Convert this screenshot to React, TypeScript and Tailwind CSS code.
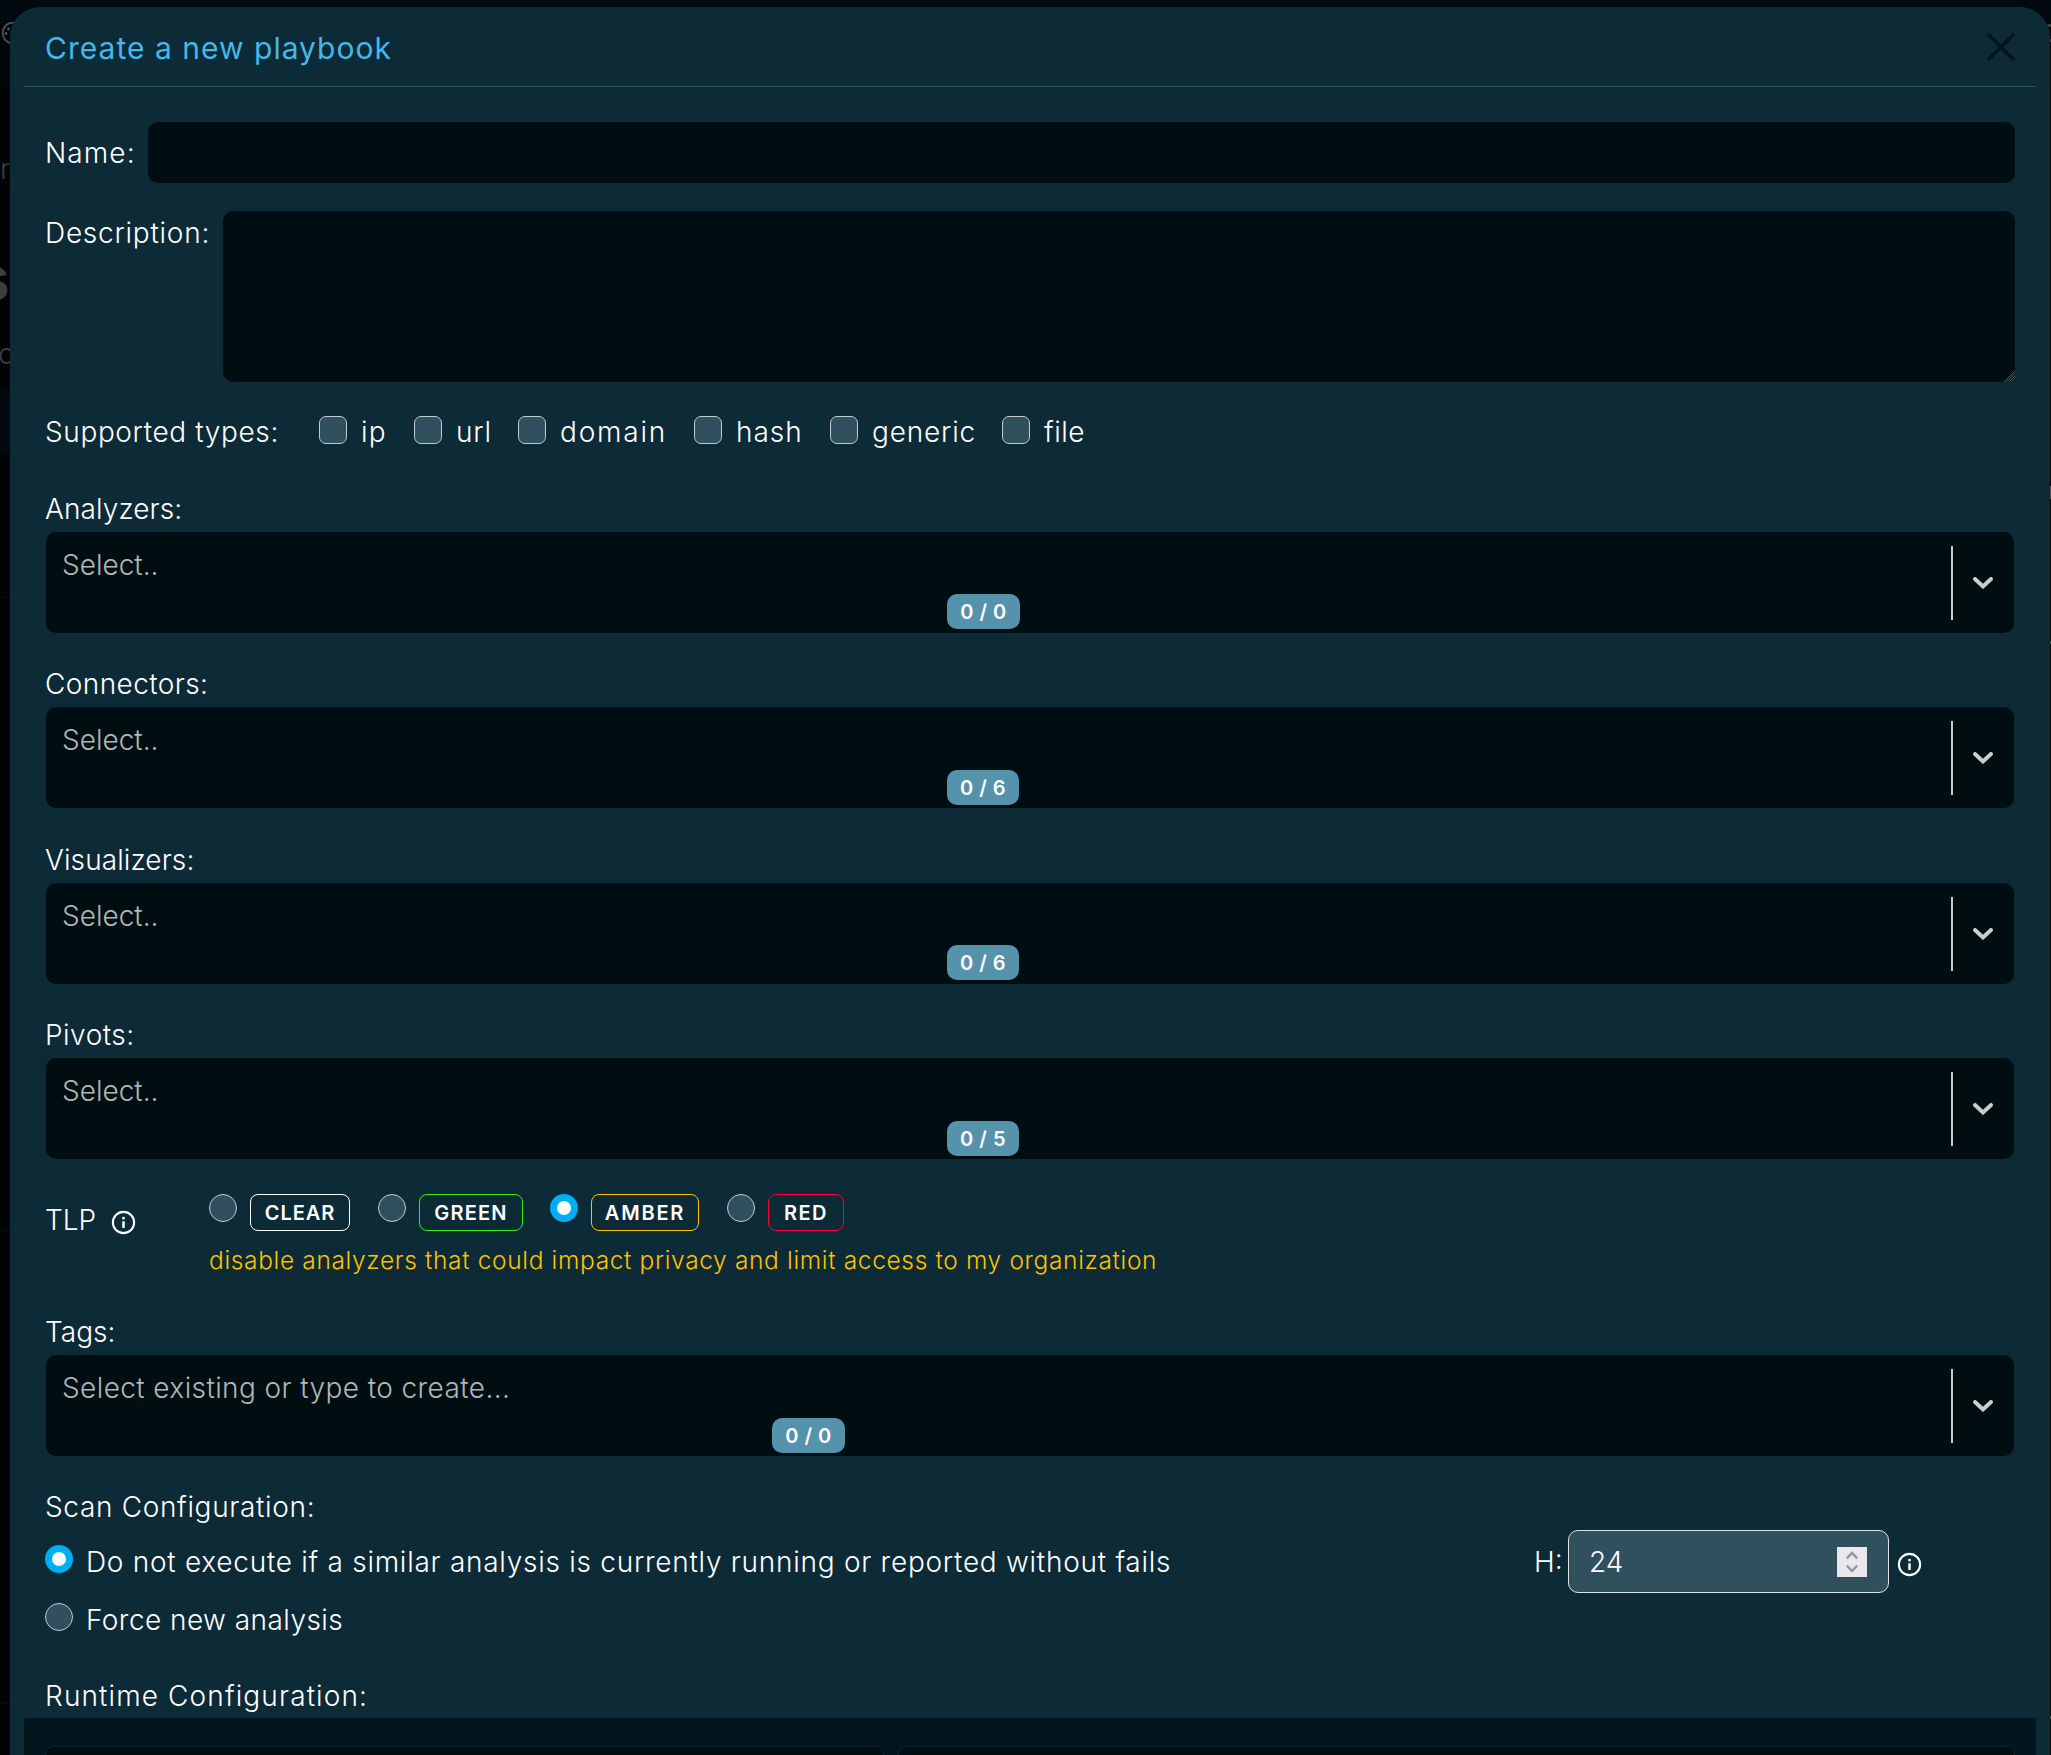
import type { ReactNode } from "react";

const TYPES = [
  { label: "ip", box: "w-[95px]", text: "tracking-[1.2px]" },
  { label: "url", box: "w-[104px]", text: "tracking-[0.8px]" },
  { label: "domain", box: "w-[176px]", text: "tracking-[1.8px]" },
  { label: "hash", box: "w-[136px]", text: "tracking-[1px]" },
  { label: "generic", box: "w-[172px]", text: "tracking-[0.8px]" },
  { label: "file", box: "w-[90px]", text: "tracking-[0.5px]" },
];

const TLPS = [
  { label: "CLEAR", cell: "w-[169px]", badge: "w-[100px] border-white tracking-[0.9px]", on: false },
  { label: "GREEN", cell: "w-[172px]", badge: "w-[104px] border-[#33f010] tracking-[1.2px]", on: false },
  { label: "AMBER", cell: "w-[177px]", badge: "w-[108px] border-[#ffc000] tracking-[1.8px]", on: true },
  { label: "RED", cell: "w-[130px]", badge: "w-[76px] border-[#ff0033] tracking-[1.5px]", on: false },
];

function Radio({ on }: { on: boolean }) {
  return on ? (
    <span className="flex size-7 shrink-0 items-center justify-center rounded-full bg-[#00aef3]">
      <span className="size-3.5 rounded-full bg-white" />
    </span>
  ) : (
    <span className="size-7 shrink-0 rounded-full border border-[#c3cbcf] bg-[#2f505c]" />
  );
}

function InfoIcon() {
  return (
    <svg viewBox="0 0 24 24" className="size-[25px] shrink-0" fill="none" stroke="white">
      <circle cx="12" cy="12" r="10.2" strokeWidth="2" />
      <path d="M12 10.8v6.4" strokeWidth="2.4" />
      <path d="M12 6.6v2.4" strokeWidth="2.4" />
    </svg>
  );
}

function Label({ children, className }: { children: ReactNode; className: string }) {
  return <div className={"ml-[35px] h-10 leading-[34px] " + className}>{children}</div>;
}

function SelectBox({ placeholder, count, text, badge }: { placeholder: string; count: string; text: string; badge: string }) {
  return (
    <div className="relative ml-9 flex h-[101px] w-[1968px] justify-between rounded-[10px] bg-[#000e12]">
      <span className={"ml-4 mt-4 h-[34px] leading-[34px] text-[#b2b6b7] " + text}>{placeholder}</span>
      <span className={"absolute flex h-[35px] items-center justify-center rounded-[10px] bg-[#5592ab] text-[20px] font-semibold tracking-[0.5px] text-white " + badge}>
        {count}
      </span>
      <div className="flex items-center">
        <span className="h-[74px] w-[2px] bg-[#cccccc]" />
        <svg viewBox="0 0 20 12" className="ml-5 mr-[21px] mt-px h-3 w-5" fill="none" stroke="#cccccc" strokeWidth="4" strokeLinecap="round" strokeLinejoin="miter">
          <path d="M2 2 L10 9.4 L18 2" />
        </svg>
      </div>
    </div>
  );
}

export default function App() {
  return (
    <div className="relative h-[1755px] w-[2051px] overflow-hidden bg-[#000405] font-['Inter'] text-[28px] font-light text-white">
      <div className="absolute left-0 top-0 h-[87px] w-full bg-gradient-to-b from-[#000a0f] to-[#000506]" />
      <svg viewBox="0 0 24 24" className="absolute left-[1px] top-[21px] size-6" fill="#4c5052" stroke="none">
        <circle cx="12" cy="12" r="10.3" fill="none" stroke="#4c5052" strokeWidth="1.8" />
        <circle cx="7.5" cy="8" r="1.4" />
        <circle cx="5" cy="12.5" r="1.4" />
      </svg>
      <span className="absolute left-0 top-[153px] leading-8 text-[#3c3e3e]">r</span>
      <span className="absolute left-[-25px] top-[248px] text-[62px] font-bold leading-[60px] text-[#3c3e3e]">s</span>
      <span className="absolute left-[-2px] top-[338px] leading-8 text-[#3c3e3e]">o</span>
      <div className="absolute left-0 top-[388px] h-[66px] w-[10px] bg-[#000a0e]" />
      <div className="absolute left-0 top-[597px] h-px w-[10px] bg-[#000d12]" />
      <div className="absolute left-0 top-[1230px] h-px w-[10px] bg-[#000d12]" />
      <div className="absolute left-0 top-[1703px] h-px w-[10px] bg-[#000d12]" />
      <div className="absolute right-0 top-[24px] h-[3px] w-[5px] bg-[#3c3e3e]" />
      <div className="absolute right-0 top-[39px] h-[3px] w-px bg-[#3c3e3e]" />
      <div className="absolute right-0 top-[486px] h-[13px] w-px bg-[#4c5052]" />
      <div className="absolute right-0 top-[641px] h-[3px] w-px bg-[#4c5052]" />
      <div className="absolute right-0 top-[1716px] h-[3px] w-px bg-[#4c5052]" />

      <div className="relative ml-[10px] mt-[7px] h-[1748px] w-[2040px] overflow-hidden rounded-t-[30px] bg-[#0c2b37]">
        <header className="mx-[14px] flex h-[80px] items-center justify-between border-b border-[#2f505d] pl-[21px] pr-[21px]">
          <h1 className="mt-0.5 text-[30px] font-normal leading-9 tracking-[1.02px] text-[#46b7e7]">Create a new playbook</h1>
          <svg viewBox="0 0 28 28" className="size-7" stroke="#04141b" strokeWidth="3.2" strokeLinecap="round">
            <path d="M2 2 L26 26 M26 2 L2 26" />
          </svg>
        </header>

        <div className="mt-[35px] flex h-[61px] items-center pl-[35px] pr-[35px]">
          <span className="w-[103px] tracking-[1.1px]">Name:</span>
          <div className="h-full flex-1 rounded-[10px] bg-[#000e12]" />
        </div>

        <div className="mt-7 flex h-[171px] pl-[35px] pr-[35px]">
          <span className="mt-[5px] w-[178px] leading-[34px] tracking-[0.75px]">Description:</span>
          <div className="relative h-full flex-1 rounded-[10px] rounded-br-none bg-[#000e12]">
            <svg viewBox="0 0 11 11" className="absolute bottom-0 right-0 size-[11px]" stroke="#68757a" strokeWidth="0.8">
              <path d="M0 11 L11 0 M2.5 11 L11 2.5 M5 11 L11 5 M7.5 11 L11 7.5" />
            </svg>
          </div>
        </div>

        <div className="mt-[34px] flex h-7 pl-[35px]">
          <span className="mt-px w-[274px] shrink-0 leading-[30px] tracking-[0.62px]">Supported types:</span>
          {TYPES.map((t) => (
            <div key={t.label} className={"flex shrink-0 " + t.box}>
              <span className="mr-[14px] size-7 shrink-0 rounded-[7px] border border-[#c3cbcf] bg-[#2f505c]" />
              <span className={"mt-px leading-[30px] " + t.text}>{t.label}</span>
            </div>
          ))}
        </div>

        <div className="mt-[48px]">
          <Label className="tracking-[0.1px]">Analyzers:</Label>
          <SelectBox placeholder="Select.." count="0 / 0" text="" badge="left-[901px] top-[62px] w-[73px]" />
        </div>
        <div className="mt-[34px]">
          <Label className="tracking-[0.4px]">Connectors:</Label>
          <SelectBox placeholder="Select.." count="0 / 6" text="" badge="left-[901px] top-[63px] w-[72px]" />
        </div>
        <div className="mt-[35px]">
          <Label className="tracking-[0.1px]">Visualizers:</Label>
          <SelectBox placeholder="Select.." count="0 / 6" text="" badge="left-[901px] top-[62px] w-[72px]" />
        </div>
        <div className="mt-[34px]">
          <Label className="tracking-[0.5px]">Pivots:</Label>
          <SelectBox placeholder="Select.." count="0 / 5" text="" badge="left-[901px] top-[63px] w-[72px]" />
        </div>

        <div className="mt-[35px] flex h-[121px] pl-[35px]">
          <div className="flex w-[164px] gap-[15px]">
            <span className="mt-[9px] leading-[34px]">TLP</span>
            <span className="mt-4">
              <InfoIcon />
            </span>
          </div>
          <div>
            <div className="flex h-[37px]">
              {TLPS.map((t) => (
                <div key={t.label} className={"flex shrink-0 gap-[13px] " + t.cell}>
                  <Radio on={t.on} />
                  <span className={"flex h-[37px] items-center justify-center rounded-[8px] border text-[20px] font-semibold " + t.badge}>{t.label}</span>
                </div>
              ))}
            </div>
            <p className="mt-3 whitespace-nowrap text-[24.5px] leading-[34px] tracking-[0.65px] text-[#ffc000]">
              disable analyzers that could impact privacy and limit access to my organization
            </p>
          </div>
        </div>

        <Label className="">Tags:</Label>
        <SelectBox placeholder="Select existing or type to create..." count="0 / 0" text="tracking-[0.4px]" badge="left-[726px] top-[63px] w-[73px]" />

        <Label className="mt-[34px] tracking-[0.66px]">Scan Configuration:</Label>
        <div className="flex h-[63px] items-center pl-[35px]">
          <div className="flex w-[1489px] items-center gap-[13px]">
            <span className="mb-[5px]">
              <Radio on />
            </span>
            <span className="leading-[34px] tracking-[0.73px]">Do not execute if a similar analysis is currently running or reported without fails</span>
          </div>
          <span className="w-[34px] leading-[34px]">H:</span>
          <div className="flex h-[63px] w-[321px] items-center justify-between rounded-[10px] border border-[#dfe3e5] bg-[#2f505c] pl-5 pr-[21px]">
            <span className="leading-[34px]">24</span>
            <span className="flex h-[30px] w-[30px] items-center justify-center bg-[#e9e9ed]">
              <svg viewBox="0 0 12 22" className="h-[22px] w-3" fill="none" stroke="#9494a3" strokeWidth="2.4">
                <path d="M0.8 7.5 L6 2 L11.2 7.5 M0.8 14.5 L6 20 L11.2 14.5" />
              </svg>
            </span>
          </div>
          <span className="ml-2 mt-1.5">
            <InfoIcon />
          </span>
        </div>
        <div className="mt-[10px] flex h-7 items-center gap-[13px] pl-[35px]">
          <Radio on={false} />
          <span className="mt-1.5 leading-[34px] tracking-[0.45px]">Force new analysis</span>
        </div>

        <Label className="mt-[48px] tracking-[1.12px]">Runtime Configuration:</Label>
        <div className="-mt-px mx-[14px] flex h-[39px] gap-3.5 overflow-hidden bg-[#00151c] pl-[21px] pr-[21px] pt-7">
          <div className="h-10 w-[839px] shrink-0 rounded-[8px] border border-[#0b2833] bg-[#000e12]" />
          <div className="h-10 flex-1 rounded-[8px] border border-[#0b2833] bg-[#000e12]" />
        </div>
      </div>
    </div>
  );
}
